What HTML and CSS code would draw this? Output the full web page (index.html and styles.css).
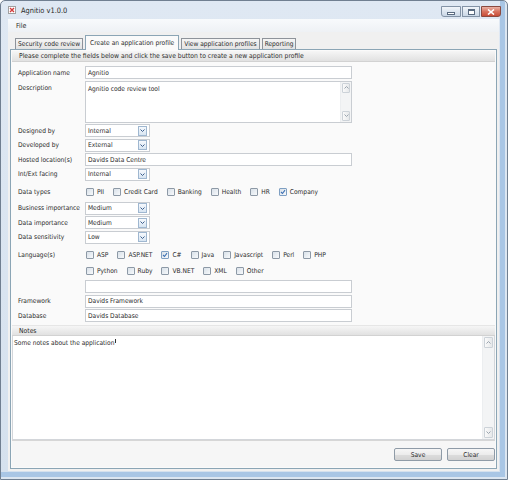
FILE: index.html
```html
<!DOCTYPE html>
<html lang="en">
<head>
<meta charset="UTF-8">
<title>Agnitio v1.0.0</title>
<link rel="stylesheet" href="styles.css">
</head>
<body>

<div class="window">
    <!-- Title bar -->
    <div class="titlebar">
        <span class="app-icon">
            <svg width="8" height="8" viewBox="0 0 8 8"><rect x="0.5" y="0.5" width="7" height="7" fill="#fff" stroke="#a0a0a0"/><path d="M2 2 L6 6 M6 2 L2 6" stroke="#d23a3a" stroke-width="1.4"/></svg>
        </span>
        <span class="title">Agnitio v1.0.0</span>
        <div class="caption">
            <span class="cap min"><i></i></span>
            <span class="cap max"><i></i></span>
            <span class="cap close">
                <svg width="8" height="6" viewBox="0 0 8 6"><path d="M1 0.5 L7 5.5 M7 0.5 L1 5.5" stroke="#fff" stroke-width="1.6"/></svg>
            </span>
        </div>
    </div>

    <div class="client">
        <div class="menubar"><span>File</span></div>

        <div class="tabs">
            <span class="tab">Security code review</span>
            <span class="tab active">Create an application profile</span>
            <span class="tab">View application profiles</span>
            <span class="tab">Reporting</span>
        </div>

        <div class="panel">
            <div class="strip">Please complete the fields below and click the save button to create a new application profile</div>

            <div class="form">
                <div class="row">
                    <div class="label">Application name</div>
                    <div class="input">Agnitio</div>
                </div>
                <div class="row top">
                    <div class="label">Description</div>
                    <div class="input textarea">
                        <div class="text">Agnitio code review tool</div>
                        <div class="vscroll">
                            <span class="sarrow"><svg width="5" height="3" viewBox="0 0 5 3"><path d="M0.5 2.5 L2.5 0.5 L4.5 2.5" fill="none" stroke="#9aa4ae"/></svg></span>
                            <span class="sarrow"><svg width="5" height="3" viewBox="0 0 5 3"><path d="M0.5 0.5 L2.5 2.5 L4.5 0.5" fill="none" stroke="#9aa4ae"/></svg></span>
                        </div>
                    </div>
                </div>
                <div class="row">
                    <div class="label">Designed by</div>
                    <div class="select">Internal<span class="drop"><svg width="5" height="3" viewBox="0 0 5 3"><path d="M0.5 0.5 L2.5 2.5 L4.5 0.5" fill="none" stroke="#3d5f8c"/></svg></span></div>
                </div>
                <div class="row">
                    <div class="label">Developed by</div>
                    <div class="select">External<span class="drop"><svg width="5" height="3" viewBox="0 0 5 3"><path d="M0.5 0.5 L2.5 2.5 L4.5 0.5" fill="none" stroke="#3d5f8c"/></svg></span></div>
                </div>
                <div class="row">
                    <div class="label">Hosted location(s)</div>
                    <div class="input">Davids Data Centre</div>
                </div>
                <div class="row">
                    <div class="label">Int/Ext facing</div>
                    <div class="select">Internal<span class="drop"><svg width="5" height="3" viewBox="0 0 5 3"><path d="M0.5 0.5 L2.5 2.5 L4.5 0.5" fill="none" stroke="#3d5f8c"/></svg></span></div>
                </div>

                <div class="row checkrow">
                    <div class="label">Data types</div>
                    <div class="checks">
                        <span class="check"><span class="box"></span>PII</span>
                        <span class="check"><span class="box"></span>Credit Card</span>
                        <span class="check"><span class="box"></span>Banking</span>
                        <span class="check"><span class="box"></span>Health</span>
                        <span class="check"><span class="box"></span>HR</span>
                        <span class="check"><span class="box on"><svg width="6" height="6" viewBox="0 0 6 6"><path d="M1 3 L2.5 4.5 L5 1.2" fill="none" stroke="#3f73b5" stroke-width="1.1"/></svg></span>Company</span>
                    </div>
                </div>

                <div class="row">
                    <div class="label">Business importance</div>
                    <div class="select">Medium<span class="drop"><svg width="5" height="3" viewBox="0 0 5 3"><path d="M0.5 0.5 L2.5 2.5 L4.5 0.5" fill="none" stroke="#3d5f8c"/></svg></span></div>
                </div>
                <div class="row">
                    <div class="label">Data importance</div>
                    <div class="select">Medium<span class="drop"><svg width="5" height="3" viewBox="0 0 5 3"><path d="M0.5 0.5 L2.5 2.5 L4.5 0.5" fill="none" stroke="#3d5f8c"/></svg></span></div>
                </div>
                <div class="row">
                    <div class="label">Data sensitivity</div>
                    <div class="select">Low<span class="drop"><svg width="5" height="3" viewBox="0 0 5 3"><path d="M0.5 0.5 L2.5 2.5 L4.5 0.5" fill="none" stroke="#3d5f8c"/></svg></span></div>
                </div>

                <div class="row top langrow">
                    <div class="label">Language(s)</div>
                    <div class="lines">
                        <div class="checks">
                            <span class="check"><span class="box"></span>ASP</span>
                            <span class="check"><span class="box"></span>ASP.NET</span>
                            <span class="check"><span class="box on"><svg width="6" height="6" viewBox="0 0 6 6"><path d="M1 3 L2.5 4.5 L5 1.2" fill="none" stroke="#3f73b5" stroke-width="1.1"/></svg></span>C#</span>
                            <span class="check"><span class="box"></span>Java</span>
                            <span class="check"><span class="box"></span>Javascript</span>
                            <span class="check"><span class="box"></span>Perl</span>
                            <span class="check"><span class="box"></span>PHP</span>
                        </div>
                        <div class="checks">
                            <span class="check"><span class="box"></span>Python</span>
                            <span class="check"><span class="box"></span>Ruby</span>
                            <span class="check"><span class="box"></span>VB.NET</span>
                            <span class="check"><span class="box"></span>XML</span>
                            <span class="check"><span class="box"></span>Other</span>
                        </div>
                    </div>
                </div>

                <div class="row">
                    <div class="label"></div>
                    <div class="input"></div>
                </div>
                <div class="row">
                    <div class="label">Framework</div>
                    <div class="input">Davids Framework</div>
                </div>
                <div class="row">
                    <div class="label">Database</div>
                    <div class="input">Davids Database</div>
                </div>
            </div>

            <div class="strip notes-head">Notes</div>
            <div class="notes">
                <div class="text">Some notes about the application<span class="caret"></span></div>
                <div class="vscroll">
                    <span class="sarrow"><svg width="5" height="3" viewBox="0 0 5 3"><path d="M0.5 2.5 L2.5 0.5 L4.5 2.5" fill="none" stroke="#9aa4ae"/></svg></span>
                    <span class="sarrow"><svg width="5" height="3" viewBox="0 0 5 3"><path d="M0.5 0.5 L2.5 2.5 L4.5 0.5" fill="none" stroke="#9aa4ae"/></svg></span>
                </div>
            </div>

            <div class="footer">
                <button class="btn">Save</button>
                <button class="btn">Clear</button>
            </div>
        </div>
    </div>
</div>

</body>
</html>
```

FILE: styles.css
```css
/* Agnitio main window */
* {
    box-sizing: border-box;
}

body {
    margin: 0;
    font-family: "DejaVu Sans Condensed", "DejaVu Sans", sans-serif;
    font-size: 6.6px;
    color: #2b2b2b;
}

.window {
    width: 508px;
    height: 480px;
    border: 1px solid #707f91;
    border-radius: 5px 5px 0 0;
    background: linear-gradient(#dfe8f3, #d5e1ee);
    box-shadow: inset -2px -2px 0 #dce6f1, inset -7px -7px 0 #a9c6e5;
    padding: 0 8px 8px 7px;
    display: flex;
    flex-direction: column;
}

/* Title bar */
.titlebar {
    height: 18px;
    flex: none;
    display: flex;
    align-items: center;
}

.app-icon {
    width: 8px;
    height: 8px;
    display: flex;
}

.title {
    margin-left: 5px;
    font-size: 7.4px;
}

.caption {
    margin-left: auto;
    margin-right: -2px;
    align-self: flex-start;
    margin-top: 5px;
    display: flex;
    gap: 1px;
}

.cap {
    width: 20px;
    height: 11px;
    border: 1px solid #8393a6;
    background: linear-gradient(#f1f5fa, #dde6f0 50%, #cad7e6);
    display: flex;
    align-items: center;
    justify-content: center;
}

.cap.min {
    border-radius: 0 0 0 3px;
}

.cap.min i {
    width: 8px;
    height: 3px;
    margin-top: 3px;
    border: 1px solid #5a6b80;
    background: #fff;
}

.cap.max {
    width: 18px;
}

.cap.max i {
    width: 7px;
    height: 6px;
    border: 1px solid #5a6b80;
    border-top-width: 2px;
    background: #fff;
}

.cap.close {
    border-color: #8a4a40;
    border-radius: 0 0 3px 0;
    background: linear-gradient(#eab2a5, #d8735f 50%, #c84d37);
}

/* Client area */
.client {
    flex: 1;
    background: #f0f0f0;
    display: flex;
    flex-direction: column;
}

.menubar {
    height: 13px;
    flex: none;
    padding-left: 8px;
    display: flex;
    align-items: center;
    font-size: 7px;
    background: linear-gradient(#f8fafc, #eef1f5);
}

.tabs {
    height: 17px;
    flex: none;
    display: flex;
    align-items: flex-end;
    padding-left: 7px;
    gap: 2px;
    position: relative;
    z-index: 1;
}

.tab {
    height: 11px;
    padding: 0 2px;
    border: 1px solid #8e939a;
    border-bottom: none;
    background: linear-gradient(#f5f5f5, #e2e2e2);
    display: flex;
    align-items: center;
    white-space: nowrap;
}

.tab.active {
    height: 15px;
    margin-bottom: -1px;
    padding: 0 4px 1px;
    border-color: #8ba5b5;
    background: #fafafa;
}

.panel {
    flex: 1;
    margin: 0 2px 2px;
    border: 1px solid #8ba5b5;
    padding: 1px;
    background: #fafafa;
    display: flex;
    flex-direction: column;
}

.strip {
    height: 11px;
    flex: none;
    padding-left: 7px;
    display: flex;
    align-items: center;
    background: linear-gradient(#f6f6f6, #e1e1e1);
    border-bottom: 1px solid #d2d2d2;
    white-space: nowrap;
    font-size: 6.75px;
}

/* Profile form */
.form {
    padding: 4px 0 3px 6px;
    display: flex;
    flex-direction: column;
    gap: 1.5px;
}

.row {
    display: flex;
    align-items: center;
}

.row.top {
    align-items: flex-start;
}

.row.top .label {
    padding-top: 3px;
}

.label {
    width: 67px;
    flex: none;
    white-space: nowrap;
}

.input {
    width: 267px;
    height: 13px;
    border: 1px solid #c9cdd2;
    background: #fff;
    padding-left: 2px;
    display: flex;
    align-items: center;
}

.input.textarea {
    height: 42px;
    align-items: stretch;
    padding: 0 0 0 2px;
}

.textarea .text {
    flex: 1;
    padding-top: 3px;
}

.select {
    width: 65px;
    height: 13px;
    border: 1px solid #c9cdd2;
    background: #fff;
    padding-left: 2px;
    display: flex;
    align-items: center;
    justify-content: space-between;
}

.drop {
    width: 9px;
    height: 10px;
    margin-right: 2px;
    border: 1px solid #9fb7d0;
    background: linear-gradient(#f6f9fd, #d8e5f2);
    display: flex;
    align-items: center;
    justify-content: center;
}

.checkrow {
    padding: 4px 0 2px;
}

.langrow {
    padding: 4px 0 2px;
}

.langrow .label {
    padding-top: 2px !important;
}

.lines {
    display: flex;
    flex-direction: column;
    gap: 3.5px;
}

.checks {
    display: flex;
    gap: 9px;
    padding-left: 1px;
}

.check {
    height: 12px;
    display: flex;
    align-items: center;
    gap: 3px;
    white-space: nowrap;
}

.box {
    width: 8px;
    height: 8px;
    border: 1px solid #8d99a6;
    border-radius: 1px;
    background: linear-gradient(135deg, #d9e1e9, #f7f9fb);
    display: flex;
    align-items: center;
    justify-content: center;
}

.box.on {
    border-color: #7e9fc2;
}

/* Scrollbars of the text boxes */
.vscroll {
    width: 11px;
    flex: none;
    padding: 1px;
    display: flex;
    flex-direction: column;
    justify-content: space-between;
    background: #f3f4f5;
    border-left: 1px solid #eceef0;
}

.sarrow {
    height: 10px;
    border: 1px solid #ccd2d8;
    border-radius: 1px;
    background: linear-gradient(to right, #fafafa, #e6e8ea);
    display: flex;
    align-items: center;
    justify-content: center;
}

/* Notes */
.notes-head {
    border-top: 1px solid #e6e6e6;
}

.notes {
    flex: 1;
    display: flex;
    background: #fff;
    border: 1px solid #d3d6da;
    border-top: none;
}

.notes .text {
    flex: 1;
    padding: 3px 1px;
}

.notes .vscroll {
    width: 12px;
}

.notes .sarrow {
    height: 11px;
}

.caret {
    display: inline-block;
    width: 1px;
    height: 4px;
    margin-left: 1px;
    vertical-align: top;
    background: #333;
}

.footer {
    height: 27px;
    flex: none;
    border-top: 1px solid #d6d6d6;
    background: #f6f6f6;
    display: flex;
    justify-content: flex-end;
    align-items: center;
    gap: 5px;
    padding-top: 1px;
}

.btn {
    width: 48px;
    height: 13px;
    padding: 0;
    font: inherit;
    color: #2b2b2b;
    border: 1px solid #8f9ba7;
    border-radius: 2px;
    background: linear-gradient(#f6f6f6, #ececec 50%, #dddddd 50%, #d2d2d2);
}
```
